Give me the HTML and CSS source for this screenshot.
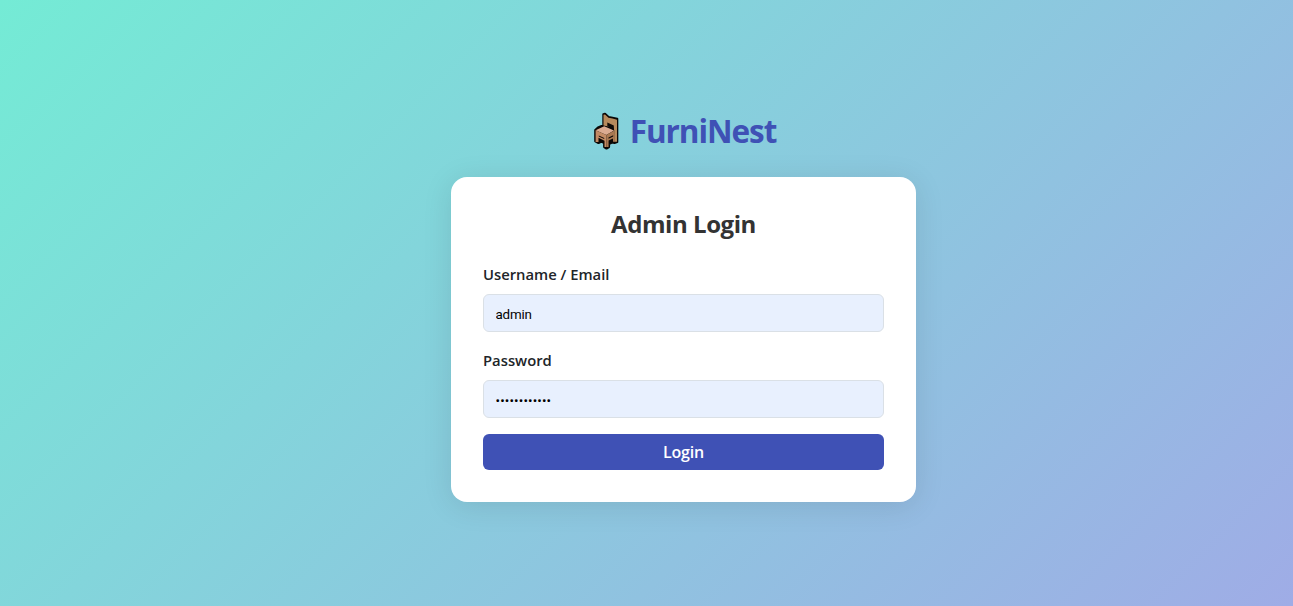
FILE: index.html
```html
<!DOCTYPE html>
<html lang="en">
<head>
<meta charset="utf-8">
<title>FurniNest Admin Login</title>
<link rel="stylesheet" href="styles.css">
</head>
<body>
<main class="page">
  <h1 class="brand">
    <svg class="brand-icon" viewBox="0 0 30 42" aria-hidden="true">
      <path d="M12.4 4.2 14 3.8 17.5 7 21.5 7.8 26.2 8.8V32L23.5 33 21 32.5 18 34V37L15.5 38.5 13.2 37V33L10.5 31.5 7.5 33 4.3 31.2V20L7 17.5 12.4 15.2Z" fill="#0b0806" stroke="#0b0806" stroke-width="2.2" stroke-linejoin="round"/>
      <path d="M12.5 4.8 14 4.6 17.5 7.8 21.5 8.6 26 9.8V31.7H23.2V20.5L22.6 17.5 12.5 15.5Z" fill="#b78a5c"/>
      <path d="M16.3 12.5 22.8 15.5V19.5L16.3 16Z" fill="#100b08"/>
      <path d="M4.6 20.2 13.2 16.2 23 20.5 15.3 25Z" fill="#dcab91"/>
      <path d="M4.6 20.2 15.3 25V37H13.5V30.8L7.5 27.8V32H4.6Z" fill="#c38b65"/>
      <path d="M15.3 25 23.4 20.5V31.7H22V28.5L17.6 30.5V37H15.3Z" fill="#a97851"/>
      <path d="M7.8 25.6 13.2 28V29L7.8 26.6ZM17.5 27.6 22.2 25.2V26.5L17.5 28.8Z" fill="#100b08"/>
    </svg>
    <span class="brand-name">FurniNest</span>
  </h1>
  <form class="card">
    <h2 class="title">Admin Login</h2>
    <label class="label" for="user">Username / Email</label>
    <input class="field" id="user" type="text" value="admin">
    <label class="label" for="pass">Password</label>
    <input class="field password" id="pass" type="password" value="abcdefghijkl">
    <button class="submit" type="button">Login</button>
  </form>
</main>
</body>
</html>
```
FILE: styles.css
```css
* { box-sizing: border-box; }
body {
  margin: 0;
  height: 100vh;
  overflow: hidden;
  font-family: "Open Sans", "Noto Sans", sans-serif;
  background: linear-gradient(135deg, #74ebd5, #9face6);
}
.page {
  display: flex;
  flex-direction: column;
  align-items: center;
  padding: 109px 0 0 74px;
}
.brand {
  display: flex;
  align-items: center;
  gap: 9px;
  height: 44px;
  margin: 0 0 24px;
  color: #3f51b5;
  font-size: 31.5px;
  font-weight: 700;
  line-height: 44px;
}
.brand-icon { width: 30px; height: 42px; }
.brand-name { letter-spacing: -1.05px; }
.card {
  width: 465px;
  height: 325px;
  padding: 31px 32px 32px;
  border-radius: 16px;
  background: #fff;
  box-shadow: 0 4px 30px rgba(0, 0, 0, 0.1);
}
.title {
  margin: 0 0 23px;
  color: #333;
  font-size: 24px;
  font-weight: 700;
  line-height: 32px;
  text-align: center;
  letter-spacing: -0.45px;
}
.label {
  display: block;
  height: 23px;
  margin-bottom: 8px;
  color: #212529;
  font-size: 14.8px;
  font-weight: 600;
  line-height: 23px;
  letter-spacing: 0;
}
.field {
  display: block;
  width: 100%;
  height: 38px;
  margin-bottom: 17px;
  padding: 3px 12px 1px 11.5px;
  border: 1px solid #dae0e6;
  border-radius: 6px;
  background: #e8f0fe;
  color: #000;
  font: 13.33px Roboto, sans-serif;
  letter-spacing: -0.15px;
}
.password { margin-bottom: 16px; letter-spacing: 0.15px; }
.submit {
  display: block;
  width: 100%;
  height: 36px;
  padding: 0;
  border: 0;
  border-radius: 6px;
  background: #3f51b5;
  color: #fff;
  font: 600 16px/37px "Open Sans", "Noto Sans", sans-serif;
  letter-spacing: -0.2px;
}
```
